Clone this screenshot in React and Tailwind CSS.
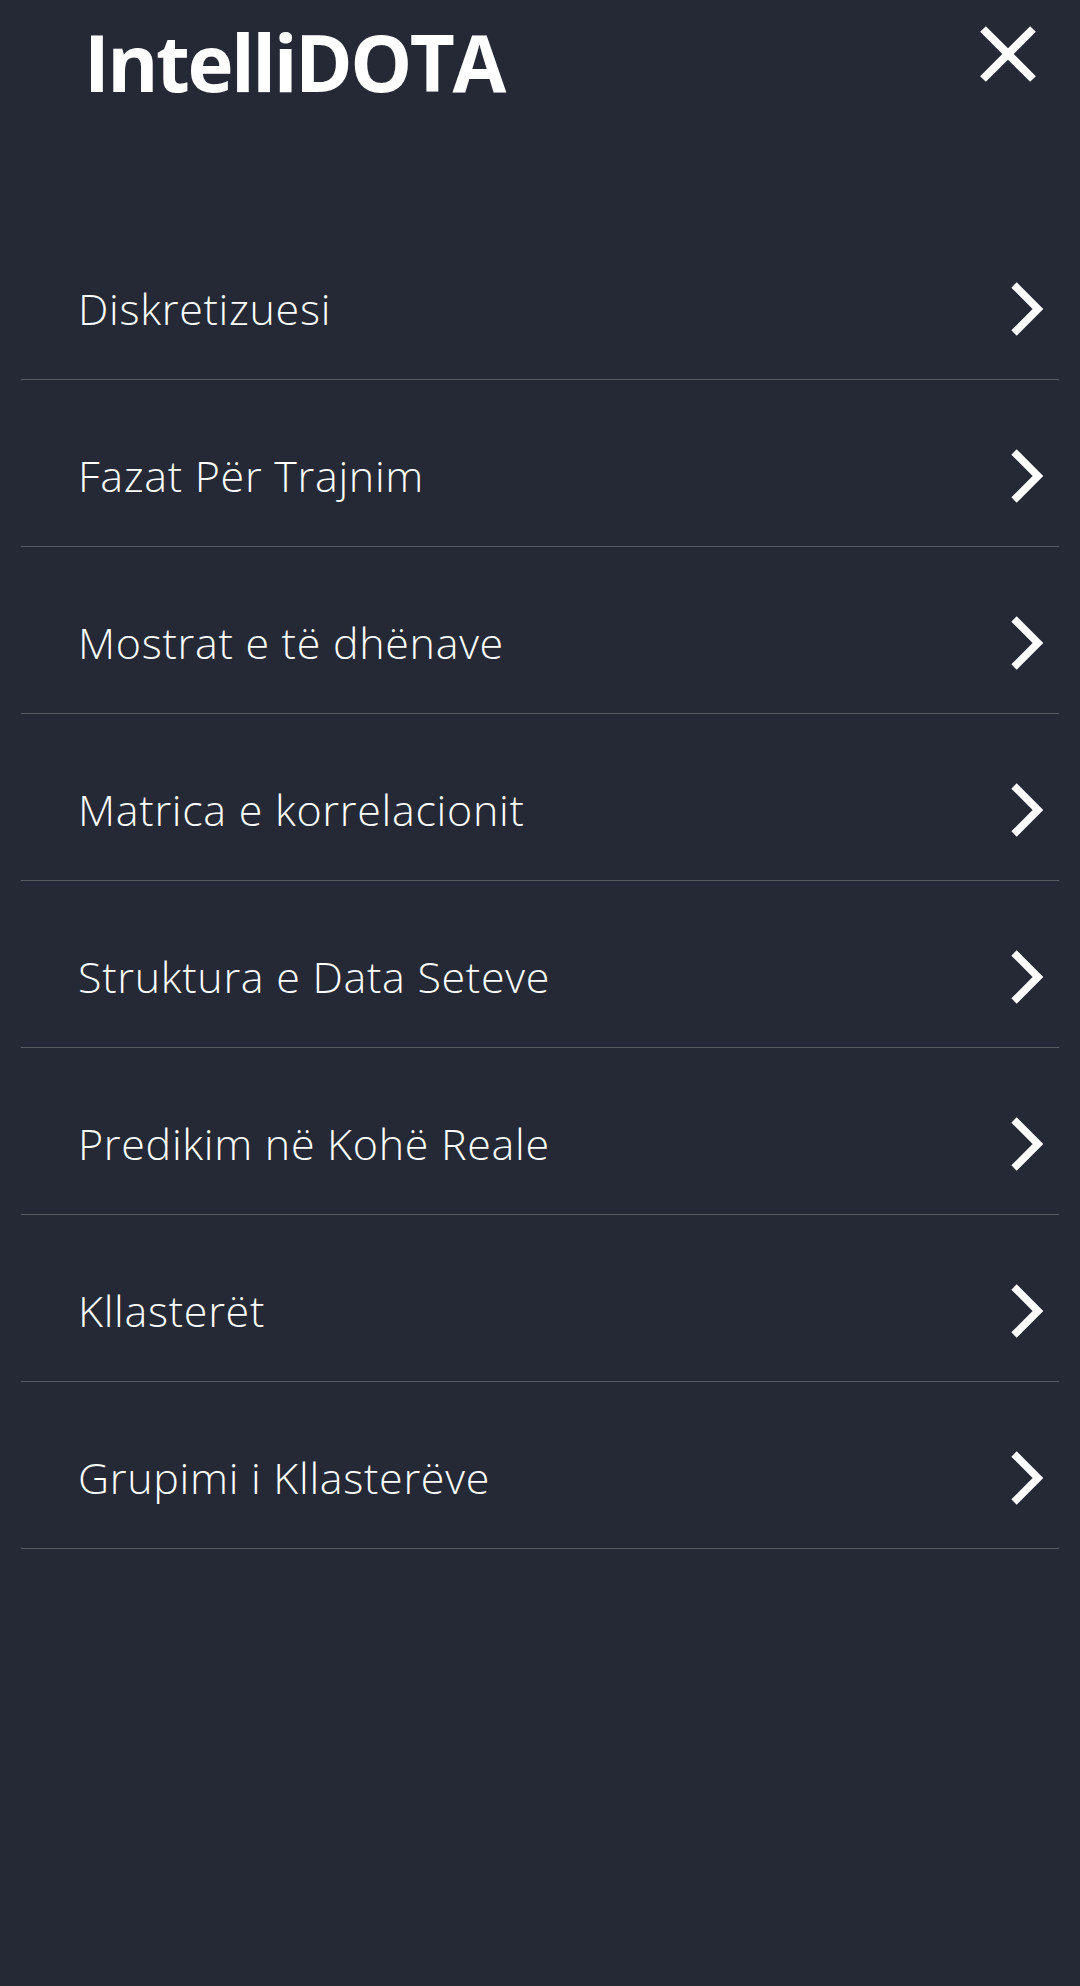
import React from "react";

const items = [
    "Diskretizuesi",
    "Fazat Për Trajnim",
    "Mostrat e të dhënave",
    "Matrica e korrelacionit",
    "Struktura e Data Seteve",
    "Predikim në Kohë Reale",
    "Kllasterët",
    "Grupimi i Kllasterëve",
];

const Chevron = () => (
    <svg width="34" height="54" viewBox="0 0 34 54" fill="none">
        <path d="M4 3 L28 27 L4 51" stroke="white" strokeWidth="7.5" strokeLinecap="butt" strokeLinejoin="miter" />
    </svg>
);

const CloseIcon = () => (
    <svg width="58" height="58" viewBox="0 0 58 58" fill="none">
        <path d="M4 4 L54 54 M54 4 L4 54" stroke="white" strokeWidth="8" strokeLinecap="butt" />
    </svg>
);

export default function App() {
    return (
        <div
            className="min-h-[1986px] w-full bg-[#252936] text-white"
            style={{ fontFamily: "'Open Sans', 'Noto Sans', sans-serif" }}
        >
            <header className="flex items-start justify-between pl-[84px] pr-[43px] pt-[14px]">
                <h1 className="text-[78px] font-bold leading-[96px] tracking-[-2.5px]">IntelliDOTA</h1>
                <button className="mt-[11px]">
                    <CloseIcon />
                </button>
            </header>

            <nav className="mt-[103px] px-[21px]">
                {items.map((item, i) => (
                    <a
                        key={i}
                        href="#"
                        className="flex h-[167px] items-center justify-between border-b border-[#565a63] pl-[57px] pr-[15px] pt-[26px]"
                    >
                        <span className="text-[43px] font-light tracking-[0.7px]">{item}</span>
                        <Chevron />
                    </a>
                ))}
            </nav>
        </div>
    );
}
